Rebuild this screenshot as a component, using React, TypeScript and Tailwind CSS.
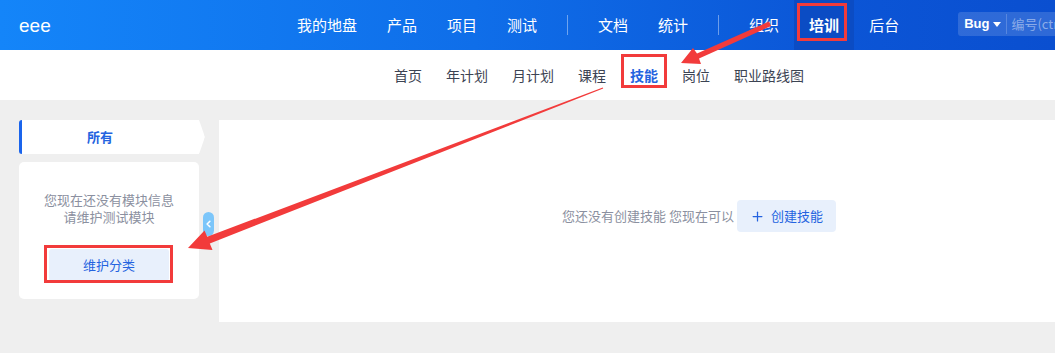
import { ChevronLeft, Plus } from 'lucide-react';

const FONT = "font-['Noto_Sans_CJK_SC','Noto_Sans',sans-serif]";

const mainNav = ['我的地盘', '产品', '项目', '测试', '|', '文档', '统计', '|', '组织', '培训', '后台'];
const subNav = ['首页', '年计划', '月计划', '课程', '技能', '岗位', '职业路线图'];

function Header() {
  return (
    <header className="flex h-[50px] items-stretch overflow-hidden whitespace-nowrap bg-[linear-gradient(90deg,#1485f9_0%,#0f6ee9_45%,#0b55d6_80%,#0a4fd0_100%)] text-white">
      <div className="flex w-[282px] shrink-0 items-center pl-[19px] font-['Liberation_Sans',sans-serif] text-[19px] leading-none">
        eee
      </div>
      <nav className="flex shrink-0 items-stretch">
        {mainNav.map((item, i) =>
          item === '|' ? (
            <div key={i} className="mx-[15px] my-[15px] w-px bg-white/40" />
          ) : (
            <div
              key={i}
              className={`relative flex shrink-0 items-center px-[15px] text-[15px] ${item === '培训' ? 'bg-[#0b4cc4] font-bold' : ''}`}
            >
              {item}
              {item === '培训' && (
                <div className="absolute left-[3px] top-[3px] h-[38px] w-[50px] border-[3px] border-[#f23b3b]" />
              )}
            </div>
          )
        )}
      </nav>
      <div className="ml-[44px] mt-[12px] flex h-[24px] w-[140px] shrink-0 items-center rounded-[3px] bg-white/15 text-[13px]">
        <div className="flex items-center gap-[4px] border-r border-white/20 pl-[6px] pr-[5px] font-['Liberation_Sans',sans-serif] font-bold">
          Bug
          <span className="h-0 w-0 border-x-[4px] border-t-[5px] border-x-transparent border-t-white" />
        </div>
        <span className="pl-[4px] text-white/45">编号(ctrl+g)</span>
      </div>
    </header>
  );
}

function SubNav() {
  return (
    <div className="flex h-[50px] items-center justify-center bg-white pl-[143px]">
      {subNav.map(item => (
        <div
          key={item}
          className={`relative px-[12px] text-[14px] ${item === '技能' ? 'font-bold text-[#2463e0]' : 'text-[#3c4353]'}`}
        >
          {item}
          {item === '技能' && (
            <div className="absolute left-[3px] top-[-11px] h-[34px] w-[46px] border-[3px] border-[#f23b3b]" />
          )}
        </div>
      ))}
    </div>
  );
}

function Sidebar() {
  return (
    <div className="flex w-[186px] shrink-0 flex-col gap-[8px]">
      <div className="flex h-[34px] items-center rounded-l-[3px] border-l-[3px] border-[#1a64ec] bg-white pl-[65px] text-[13px] font-bold text-[#2463e0] shadow-[0_1px_2px_rgba(0,0,0,0.08)] [clip-path:polygon(0_0,180px_0,186px_17px,180px_34px,0_34px)]">
        所有
      </div>
      <div className="flex h-[137px] w-[180px] flex-col items-center rounded-[5px] bg-white pt-[29px]">
        <p className="text-center text-[13px] leading-[17px] text-[#8b90a0]">
          您现在还没有模块信息
          <br />
          请维护测试模块
        </p>
        <div className="relative mt-[24px]">
          <div className="flex h-[32px] w-[120px] items-center justify-center rounded-[3px] bg-[#e8f0fc] text-[13px] text-[#2463e0]">
            维护分类
          </div>
          <div className="absolute left-[-5px] top-[-4px] h-[38px] w-[129px] border-[3px] border-[#f23b3b]" />
        </div>
      </div>
    </div>
  );
}

function Arrows() {
  return (
    <svg className="pointer-events-none absolute left-0 top-0" width="1055" height="353">
      <polygon
        fill="#f23b3b"
        points="771,26 699,58.5 701,64 681,63 693,48 697,53.5 769,21.5"
      />
      <polygon
        fill="#f23b3b"
        points="603.2,88.6 209.8,243.4 212.5,250 188,248 204.5,230.5 207.2,236.8 602.8,87.4"
      />
    </svg>
  );
}

export default function App() {
  return (
    <div className={`relative h-[353px] w-[1055px] overflow-hidden bg-[#efefef] ${FONT}`}>
      <Header />
      <SubNav />
      <div className="flex items-start pl-[19px] pt-[20px]">
        <Sidebar />
        <div className="flex h-[202px] w-[14px] shrink-0 items-start">
          <div className="ml-[-2px] mt-[92px] flex h-[24px] w-[11px] items-center justify-center rounded-full bg-[#7cc6fa] text-white">
            <ChevronLeft size={12} strokeWidth={3.5} />
          </div>
        </div>
        <main className="flex h-[202px] flex-1 items-center justify-center bg-white pb-[10px] pl-[124px]">
          <span className="text-[13px] text-[#8b90a0]">您还没有创建技能 您现在可以</span>
          <div className="ml-[3px] flex h-[32px] w-[99px] items-center justify-center gap-[6px] rounded-[4px] bg-[#e8f0fc] text-[13px] text-[#2463e0]">
            <Plus size={15} strokeWidth={2} />
            创建技能
          </div>
        </main>
      </div>
      <Arrows />
    </div>
  );
}
